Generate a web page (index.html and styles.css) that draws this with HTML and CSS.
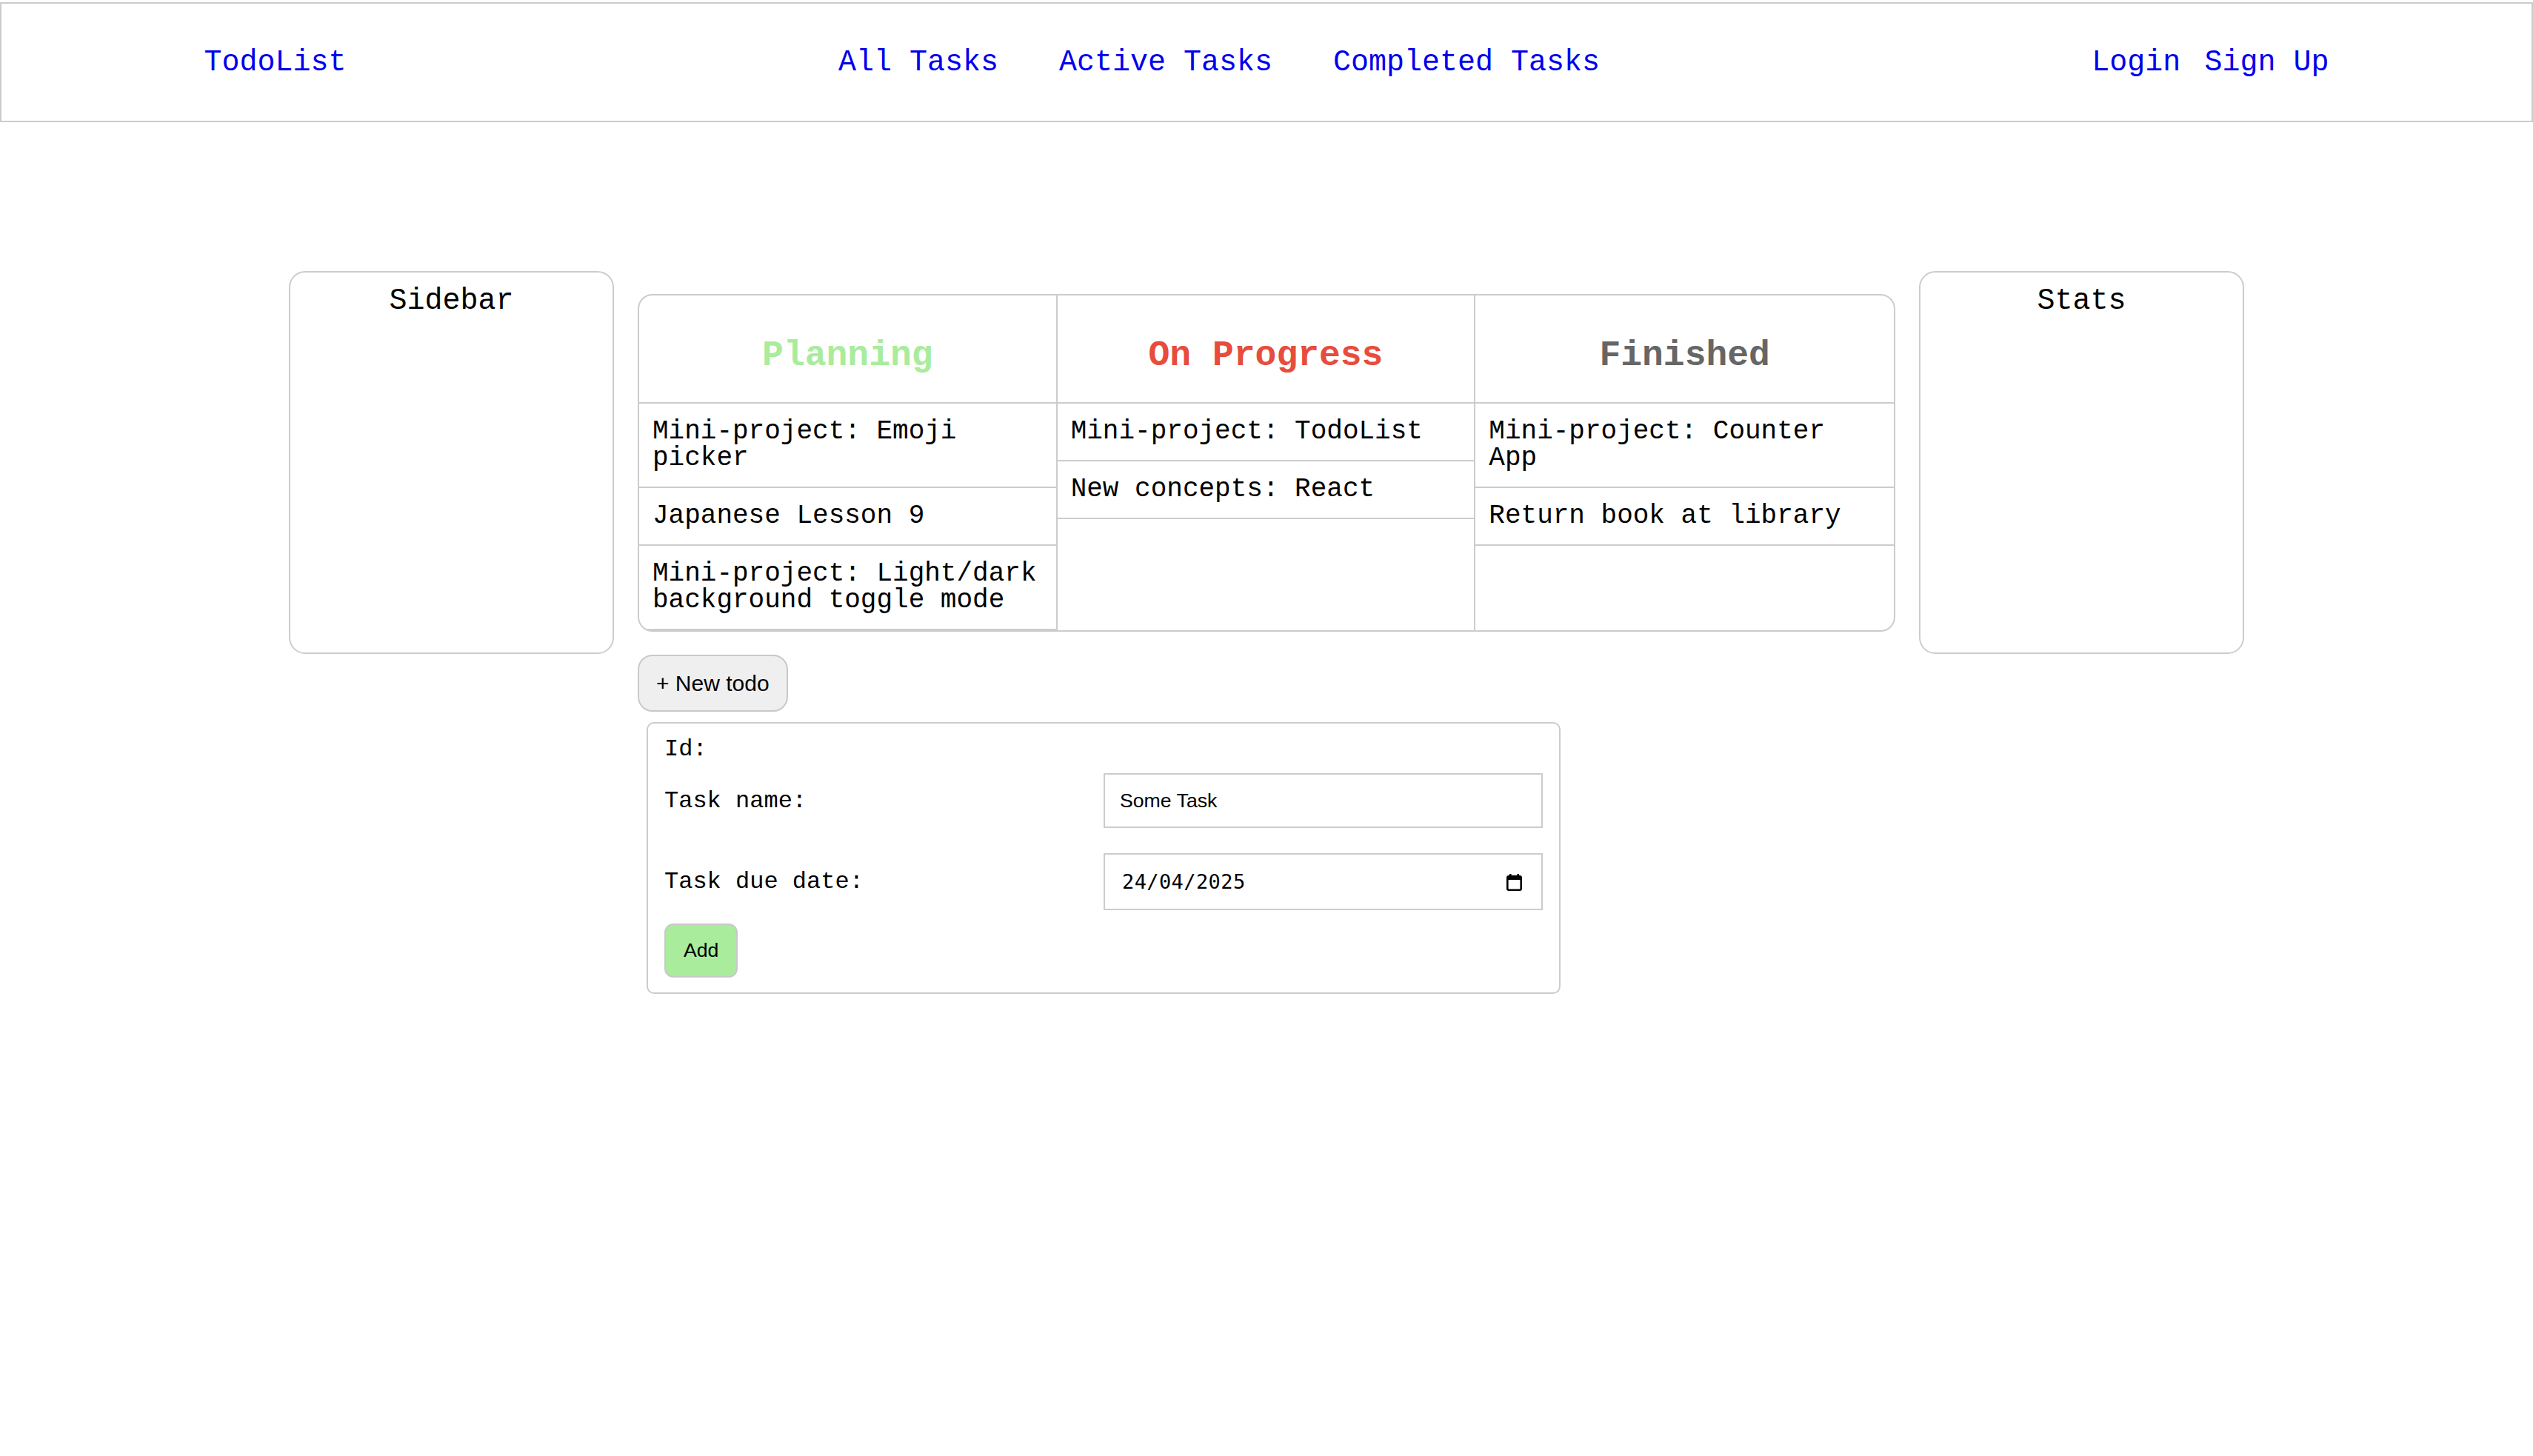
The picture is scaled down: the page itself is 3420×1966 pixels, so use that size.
FILE: index.html
```html
<!DOCTYPE html>
<html lang="en">
<head>
<meta charset="utf-8">
<title>TodoList</title>
<link rel="stylesheet" href="styles.css">
</head>
<body>
<header class="topbar">
  <a class="brand" href="#">TodoList</a>
  <nav class="nav-links">
    <a href="#">All Tasks</a>
    <a href="#">Active Tasks</a>
    <a href="#">Completed Tasks</a>
  </nav>
  <div class="auth-links">
    <a href="#">Login</a>
    <a href="#">Sign Up</a>
  </div>
</header>

<main class="main">
  <aside class="panel">Sidebar</aside>

  <section class="center-col">
    <div class="board">
      <div class="column">
        <h2 class="column-head planning">Planning</h2>
        <div class="task">Mini-project: Emoji picker</div>
        <div class="task">Japanese Lesson 9</div>
        <div class="task">Mini-project: Light/dark background toggle mode</div>
      </div>
      <div class="column">
        <h2 class="column-head progress">On Progress</h2>
        <div class="task">Mini-project: TodoList</div>
        <div class="task">New concepts: React</div>
      </div>
      <div class="column">
        <h2 class="column-head finished">Finished</h2>
        <div class="task">Mini-project: Counter App</div>
        <div class="task">Return book at library</div>
      </div>
    </div>

    <button class="new-todo" type="button">+ New todo</button>

    <form class="todo-form">
      <div class="form-row id-row"><span class="label">Id:</span><span></span></div>
      <label class="form-row name-row"><span class="label">Task name:</span><input class="text-input" type="text" value="Some Task"></label>
      <div class="form-row date-row"><span class="label">Task due date:</span>
        <div class="date-field"><span class="date-text">24/04/2025</span>
          <svg class="cal-icon" width="21" height="23" viewBox="0 0 21 23"><rect x="1.3" y="3.3" width="18.4" height="18.4" rx="2" fill="none" stroke="#000" stroke-width="2.6"/><rect x="1" y="3" width="19" height="5" fill="#000"/><rect x="4" y="0" width="2.6" height="4" fill="#000"/><rect x="14.4" y="0" width="2.6" height="4" fill="#000"/></svg>
        </div>
      </div>
      <div class="add-row"><button class="add-btn" type="button">Add</button></div>
    </form>
  </section>

  <aside class="panel">Stats</aside>
</main>
</body>
</html>
```

FILE: styles.css
```css
html, body {
  margin: 0;
  padding: 0;
  background: #fff;
}

body {
  font-family: "Liberation Mono", "Courier New", monospace;
  color: #000;
}

a {
  color: #0000ee;
  text-decoration: none;
}

.topbar {
  box-sizing: border-box;
  margin-top: 3px;
  height: 162px;
  border: 2px solid #cccccc;
  padding: 0 8%;
  display: flex;
  align-items: center;
  justify-content: space-between;
  font-size: 40px;
}

.nav-links {
  display: flex;
  gap: 82px;
}

.auth-links {
  display: flex;
  gap: 32px;
}

.main {
  display: flex;
  justify-content: center;
  align-items: flex-start;
  gap: 32px;
  margin-top: 201px;
}

.panel {
  box-sizing: border-box;
  width: 439px;
  height: 517px;
  border: 2px solid #cccccc;
  border-radius: 22px;
  padding: 16px;
  text-align: center;
  font-size: 40px;
}

.center-col {
  width: 1698px;
  margin-top: 31px;
  display: flex;
  flex-direction: column;
  align-items: flex-start;
}

.board {
  box-sizing: border-box;
  width: 100%;
  display: grid;
  grid-template-columns: repeat(3, 1fr);
  border: 2px solid #cccccc;
  border-radius: 20px;
  overflow: hidden;
}

.column {
  border-right: 2px solid #cccccc;
}

.column:last-child {
  border-right: none;
}

.column-head {
  box-sizing: border-box;
  margin: 0;
  height: 146px;
  padding-top: 54px;
  border-bottom: 2px solid #cccccc;
  text-align: center;
  font-size: 48px;
  font-weight: bold;
  line-height: normal;
}

.planning { color: #a8ec9c; }
.progress { color: #e74c3c; }
.finished { color: #666666; }

.task {
  padding: 20px 18px;
  font-size: 36px;
  line-height: 36px;
  border-bottom: 2px solid #cccccc;
}

.new-todo {
  box-sizing: border-box;
  margin-top: 31px;
  height: 77px;
  padding: 0 23px;
  font-family: "Liberation Sans", Arial, sans-serif;
  font-size: 30px;
  color: #000;
  background: #efefef;
  border: 2px solid #c9c9c9;
  border-radius: 20px;
}

.todo-form {
  box-sizing: border-box;
  width: 1234px;
  margin: 14px 0 0 12px;
  padding: 16px 22px 20px;
  border: 2px solid #cccccc;
  border-radius: 10px;
  font-size: 32px;
}

.form-row {
  display: grid;
  grid-template-columns: 1fr 1fr;
  align-items: center;
}

.id-row {
  height: 36px;
  margin-bottom: 15px;
}

.name-row {
  height: 74px;
  margin-bottom: 34px;
}

.date-row {
  height: 77px;
  margin-bottom: 18px;
}

.text-input {
  box-sizing: border-box;
  width: 100%;
  height: 74px;
  margin: 0;
  padding: 0 20px;
  border: 2px solid #cccccc;
  border-radius: 0;
  outline: none;
  font-family: "Liberation Sans", Arial, sans-serif;
  font-size: 26.67px;
  color: #000;
  background: #fff;
}

.date-field {
  box-sizing: border-box;
  height: 77px;
  border: 2px solid #cccccc;
  padding: 0 26px 0 23px;
  display: flex;
  align-items: center;
  justify-content: space-between;
}

.date-text {
  font-family: "DejaVu Sans Mono", monospace;
  font-size: 27px;
  letter-spacing: 0.4px;
  color: #000;
}

.cal-icon {
  display: block;
  margin-top: 2px;
}

.add-row {
  display: flex;
}

.add-btn {
  box-sizing: border-box;
  height: 73px;
  padding: 0 24px;
  font-family: "Liberation Sans", Arial, sans-serif;
  font-size: 26.67px;
  color: #000;
  background: #a8ec9c;
  border: 2px solid #c9c9c9;
  border-radius: 12px;
}
```
